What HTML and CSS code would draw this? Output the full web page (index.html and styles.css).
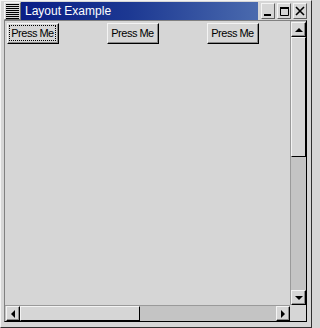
FILE: index.html
```html
<!DOCTYPE html>
<html>
<head>
<meta charset="utf-8">
<link rel="stylesheet" href="styles.css">
</head>
<body>
<div class="window">
  <div class="titlebar">
    <div class="menu-btn"><div class="menu-lines"></div></div>
    <div class="title">Layout Example</div>
    <div class="wm-buttons">
      <div class="wm-btn"><svg width="12" height="12" viewBox="0 0 12 12"><rect x="2" y="9" width="7" height="2" fill="#000"/></svg></div>
      <div class="wm-btn"><svg width="12" height="12" viewBox="0 0 12 12"><path d="M2.5 2.5h8v8h-8z" fill="none" stroke="#000"/><rect x="2" y="2" width="9" height="2" fill="#000"/></svg></div>
      <div class="wm-btn"><svg width="12" height="12" viewBox="0 0 12 12"><path d="M2 2L10 10M10 2L2 10" stroke="#000" stroke-width="1.6"/></svg></div>
    </div>
  </div>
  <div class="client">
    <div class="content">
      <div class="cell"><button class="btn focused"><span class="focus">Press Me</span></button></div>
      <div class="cell"><button class="btn"><span class="focus">Press Me</span></button></div>
      <div class="cell"><button class="btn"><span class="focus">Press Me</span></button></div>
    </div>
    <div class="vscroll">
      <div class="arrow"><span class="tri up"></span></div>
      <div class="vthumb"></div>
      <div class="fill"></div>
      <div class="arrow"><span class="tri down"></span></div>
    </div>
    <div class="hscroll">
      <div class="arrow"><span class="tri left"></span></div>
      <div class="hthumb"></div>
      <div class="fill"></div>
      <div class="arrow"><span class="tri right"></span></div>
    </div>
    <div class="corner"></div>
  </div>
</div>
</body>
</html>
```

FILE: styles.css
```css
html, body {
  margin: 0;
  padding: 0;
  background: #d6d6d6;
}

.window {
  width: 312px;
  height: 328px;
  box-sizing: border-box;
  border: 1px solid;
  border-color: #f4f4f4 #303030 #303030 #f4f4f4;
  padding: 1px 4px 5px 3px;
  background: #d6d6d6;
  display: flex;
  flex-direction: column;
  font-family: "Liberation Sans", Arial, sans-serif;
}

.titlebar {
  height: 18px;
  display: flex;
  flex: none;
}

.menu-btn {
  width: 17px;
  height: 18px;
  box-sizing: border-box;
  border: 1px solid;
  border-color: #f4f4f4 #707070 #707070 #f4f4f4;
  background: #d6d6d6;
  padding: 1px 1px;
}

.menu-lines {
  width: 13px;
  height: 15px;
  background: repeating-linear-gradient(to bottom, #000 0 1px, transparent 1px 2px);
}

.title {
  flex: 1;
  background: linear-gradient(to right, #0a1e86 0%, #1c3892 45%, #4a6aae 100%);
  color: #fff;
  font-size: 12px;
  line-height: 18px;
  padding-left: 4px;
  white-space: nowrap;
}

.wm-buttons {
  display: flex;
  gap: 2px;
  padding: 1px 0 1px 3px;
  background: #d6d6d6;
}

.wm-btn {
  width: 14px;
  height: 16px;
  box-sizing: border-box;
  border: 1px solid;
  border-color: #f4f4f4 #606060 #606060 #f4f4f4;
  background: #d6d6d6;
  display: flex;
  align-items: center;
  justify-content: center;
}

.client {
  flex: 1;
  box-sizing: border-box;
  border: 1px solid;
  border-color: #808080 #000 #000 #808080;
  display: grid;
  grid-template-columns: 285px 16px;
  grid-template-rows: 1fr 16px;
}

.content {
  background: #d6d6d6;
  display: grid;
  grid-template-columns: repeat(3, 100px);
  align-content: start;
  padding: 2px 0 0 2px;
}

.btn {
  width: 52px;
  height: 21px;
  box-sizing: border-box;
  margin: 0;
  padding: 1px;
  background: #d6d6d6;
  border: 1px solid;
  border-color: #f4f4f4 #000 #000 #f4f4f4;
  box-shadow: inset -1px -1px 0 #8a8a8a;
  font-family: "Liberation Sans", Arial, sans-serif;
  font-size: 11px;
  letter-spacing: -0.5px;
  color: #000;
  display: flex;
}

.focus {
  flex: 1;
  display: flex;
  align-items: center;
  justify-content: center;
  border: 1px dotted transparent;
  margin-right: 1px;
  margin-bottom: 1px;
}

.focused .focus {
  border-color: #000;
}

.vscroll {
  background: #c4c4c4;
  border-left: 1px solid #9a9a9a;
  display: flex;
  flex-direction: column;
  padding: 1px 0 0 0;
}

.hscroll {
  background: #c4c4c4;
  border-top: 1px solid #9a9a9a;
  display: flex;
  padding: 0 0 0 1px;
}

.corner {
  background: #d6d6d6;
}

.arrow {
  flex: none;
  width: 15px;
  height: 14px;
  box-sizing: border-box;
  background: #d6d6d6;
  border: 1px solid;
  border-color: #f4f4f4 #000 #000 #f4f4f4;
  box-shadow: inset -1px -1px 0 #8a8a8a;
  display: flex;
  align-items: center;
  justify-content: center;
}

.vscroll .arrow {
  height: 15px;
  width: 15px;
}

.hscroll .arrow {
  width: 14px;
  height: 15px;
}

.vthumb {
  flex: none;
  width: 15px;
  height: 120px;
  box-sizing: border-box;
  background: #d6d6d6;
  border: 1px solid;
  border-color: #f4f4f4 #000 #000 #f4f4f4;
}

.hthumb {
  flex: none;
  width: 120px;
  height: 15px;
  box-sizing: border-box;
  background: #d6d6d6;
  border: 1px solid;
  border-color: #f4f4f4 #000 #000 #f4f4f4;
}

.fill {
  flex: 1;
}

.tri {
  width: 0;
  height: 0;
  border-style: solid;
}

.tri.up {
  border-width: 0 4px 4px 4px;
  border-color: transparent transparent #000 transparent;
}

.tri.down {
  border-width: 4px 4px 0 4px;
  border-color: #000 transparent transparent transparent;
}

.tri.left {
  border-width: 4px 4px 4px 0;
  border-color: transparent #000 transparent transparent;
}

.tri.right {
  border-width: 4px 0 4px 4px;
  border-color: transparent transparent transparent #000;
}
```
